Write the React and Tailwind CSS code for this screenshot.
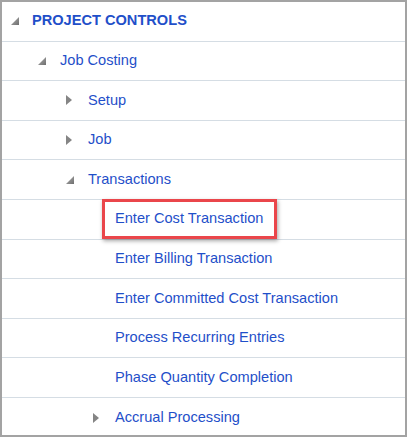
import React from 'react';

// Oracle-style navigator tree: gray triangles, blue links, hairline dividers
const ROWS = [
  { label: 'PROJECT CONTROLS', level: 0, icon: 'open', bold: true },
  { label: 'Job Costing', level: 1, icon: 'open' },
  { label: 'Setup', level: 2, icon: 'closed' },
  { label: 'Job', level: 2, icon: 'closed' },
  { label: 'Transactions', level: 2, icon: 'open' },
  { label: 'Enter Cost Transaction', level: 3, highlight: true },
  { label: 'Enter Billing Transaction', level: 3 },
  { label: 'Enter Committed Cost Transaction', level: 3 },
  { label: 'Process Recurring Entries', level: 3 },
  { label: 'Phase Quantity Completion', level: 3 },
  { label: 'Accrual Processing', level: 3, icon: 'closed', last: true },
];

const INDENT = ['pl-[9px]', 'pl-[36px]', 'pl-[64px]', 'pl-[91px]'];

function Open() {
  return (
    <svg width="8" height="8" viewBox="0 0 8 8" className="shrink-0">
      <defs>
        <linearGradient id="tri" x1="0" y1="0" x2="1" y2="1">
          <stop offset="0" stopColor="#b0b0b0" />
          <stop offset="1" stopColor="#6e6e6e" />
        </linearGradient>
      </defs>
      <polygon points="8,0 8,8 0,8" fill="url(#tri)" />
    </svg>
  );
}

function Closed() {
  return (
    <svg width="6" height="10" viewBox="0 0 6 10" className="shrink-0">
      <polygon points="0,0 6,5 0,10" fill="#858585" />
    </svg>
  );
}

function Row({ row }) {
  return (
    <div
      className={`flex items-center h-[39.6px] ${INDENT[row.level]} ${row.last ? '' : 'border-b border-[#d5dde4]'}`}
    >
      <span className="w-[22px] flex items-center">
        {row.icon === 'open' && <Open />}
        {row.icon === 'closed' && <Closed />}
      </span>
      {row.highlight ? (
        <span className="relative text-[14.6px] text-[#1f4fc9]">
          {row.label}
          <span className="absolute left-[-13px] right-[-14px] top-[-9px] bottom-[-9px] border-[3px] border-[#ea464b] shadow-[1px_2px_4px_rgba(0,0,0,0.35)]" />
        </span>
      ) : (
        <span
          className={`text-[14.6px] text-[#1f4fc9] ${row.bold ? 'font-bold' : ''} ${row.level === 0 ? '-ml-[1px]' : ''}`}
        >
          {row.label}
        </span>
      )}
    </div>
  );
}

export default function App() {
  return (
    <div
      className="w-[407px] h-[437px] bg-white border-2 border-[#a3a3a3] overflow-hidden"
      style={{ fontFamily: '"Liberation Sans", Arial, sans-serif' }}
    >
      {ROWS.map((r) => (
        <Row key={r.label} row={r} />
      ))}
    </div>
  );
}
